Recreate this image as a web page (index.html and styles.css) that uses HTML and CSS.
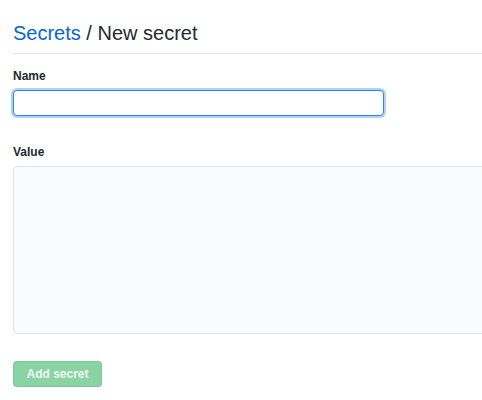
FILE: index.html
```html
<!DOCTYPE html>
<html lang="en">
<head>
<meta charset="utf-8">
<title>New secret</title>
<link rel="stylesheet" href="styles.css">
</head>
<body>
<main class="page">
  <div class="subhead">
    <h2 class="subhead-heading"><a class="crumb" href="#">Secrets</a> / New secret</h2>
  </div>
  <form class="form">
    <div class="field">
      <label class="label" for="name">Name</label>
      <input class="input input-focus" id="name" type="text">
    </div>
    <div class="field">
      <label class="label" for="value">Value</label>
      <textarea class="textarea" id="value"></textarea>
    </div>
    <div class="actions">
      <button class="btn-primary" type="button" disabled>Add secret</button>
    </div>
  </form>
</main>
</body>
</html>
```

FILE: styles.css
```css
* { box-sizing: border-box; }
html, body { margin: 0; padding: 0; background: #fff; }
body {
  font-family: "Liberation Sans", Arial, Helvetica, sans-serif;
  color: #24292e;
  overflow: hidden;
}
.page {
  padding: 20px 0 0 13px;
  width: 495px;
}
.subhead {
  border-bottom: 1px solid #e1e4e8;
  padding-bottom: 6px;
}
.subhead-heading {
  margin: 0;
  font-size: 20px;
  font-weight: 400;
  line-height: 27px;
  color: #24292e;
}
.crumb {
  color: #0366d6;
  text-decoration: none;
}
.form {
  display: flex;
  flex-direction: column;
}
.field {
  display: flex;
  flex-direction: column;
}
.field:first-child { margin-top: 15px; }
.field + .field { margin-top: 29px; }
.label {
  font-size: 12px;
  font-weight: 700;
  line-height: 15px;
  margin-bottom: 6px;
  color: #24292e;
}
.input {
  width: 371px;
  height: 26px;
  border: 1px solid #2188ff;
  border-radius: 4px;
  background: #fff;
  outline: none;
  padding: 0 7px;
  font: inherit;
}
.input-focus {
  box-shadow: 0 0 0 2px rgba(3, 102, 214, 0.3);
}
.textarea {
  width: 480px;
  height: 168px;
  border: 1px solid #e1e4e8;
  border-radius: 4px;
  background: #fafbfc;
  resize: none;
  outline: none;
  font: inherit;
}
.actions {
  margin-top: 27px;
}
.btn-primary {
  width: 89px;
  height: 26px;
  border: 1px solid rgba(27, 31, 35, 0.08);
  border-radius: 4px;
  background: #8ad3a3;
  color: rgba(255, 255, 255, 0.9);
  font-family: "Liberation Sans", Arial, sans-serif;
  font-size: 12px;
  font-weight: 700;
  padding: 0;
}
```
